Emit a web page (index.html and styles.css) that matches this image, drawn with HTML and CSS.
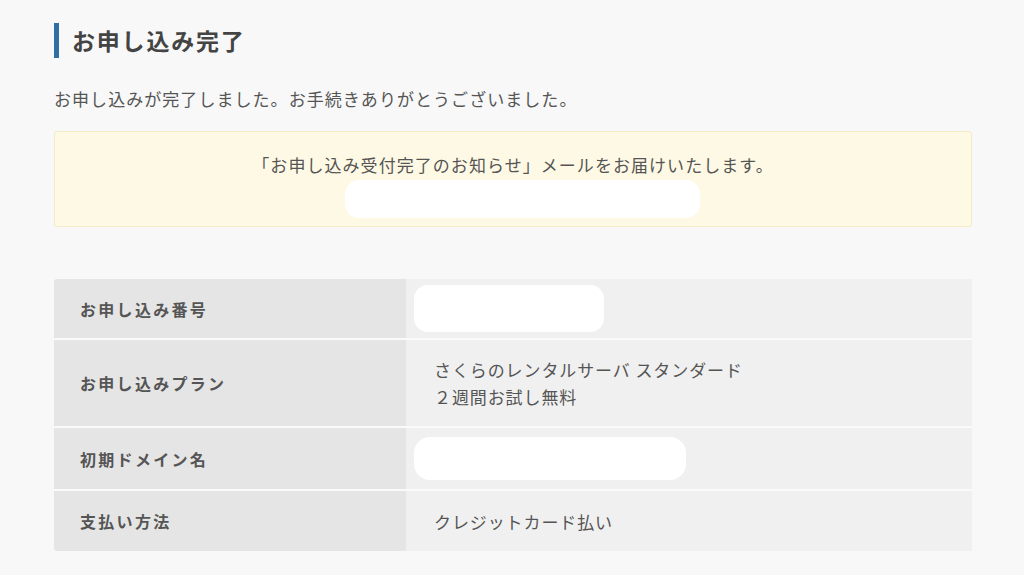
FILE: index.html
```html
<!DOCTYPE html>
<html lang="ja">
<head>
<meta charset="utf-8">
<link rel="stylesheet" href="styles.css">
</head>
<body>
<main class="page">
  <h1 class="title">お申し込み完了</h1>
  <p class="lead">お申し込みが完了しました。お手続きありがとうございました。</p>
  <div class="notice">
    <p class="notice-text">「お申し込み受付完了のお知らせ」メールをお届けいたします。</p>
    <div class="mask mask-mail"></div>
  </div>
  <table class="info">
    <tr class="row-id">
      <th>お申し込み番号</th>
      <td><div class="mask mask-id"></div></td>
    </tr>
    <tr class="row-plan">
      <th>お申し込みプラン</th>
      <td>さくらのレンタルサーバ スタンダード<br>２週間お試し無料</td>
    </tr>
    <tr class="row-domain">
      <th>初期ドメイン名</th>
      <td><div class="mask mask-domain"></div></td>
    </tr>
    <tr class="row-pay">
      <th>支払い方法</th>
      <td>クレジットカード払い</td>
    </tr>
  </table>
</main>
</body>
</html>
```

FILE: styles.css
```css
html, body {
  margin: 0;
  padding: 0;
  background: #f8f8f8;
}
body {
  font-family: "Noto Sans CJK JP", "Noto Sans", sans-serif;
  color: #555;
}
.page {
  width: 918px;
  margin-left: 54px;
  padding-top: 23px;
}
.title {
  margin: 0;
  border-left: 5px solid #2f6fa3;
  padding-left: 13px;
  font-size: 23px;
  font-weight: bold;
  line-height: 35px;
  color: #444;
  letter-spacing: 1.8px;
}
.lead {
  margin: 28px 0 0;
  font-size: 17px;
  letter-spacing: 1.05px;
  line-height: 26px;
}
.notice {
  margin-top: 19px;
  height: 94px;
  background: #fef9e4;
  border: 1px solid #f3ebc6;
  border-radius: 3px;
  display: flex;
  flex-direction: column;
  align-items: center;
}
.notice-text {
  margin: 20px 0 0;
  font-size: 17px;
  letter-spacing: 1.05px;
  line-height: 26px;
}
.mask {
  background: #fff;
}
.mask-mail {
  width: 355px;
  height: 38px;
  border-radius: 14px;
  margin: 2px 0 0 18px;
}
.info {
  margin-top: 52px;
  width: 100%;
  border-collapse: collapse;
  font-size: 17px;
  letter-spacing: 0.9px;
}
.info tr {
  border-top: 2px solid #fafafa;
}
.info tr:first-child {
  border-top: none;
}
.info th {
  width: 352px;
  background: #e5e5e5;
  text-align: left;
  font-weight: bold;
  font-size: 16px;
  letter-spacing: 2.3px;
  padding: 0 0 0 26px;
  box-sizing: border-box;
  color: #555;
}
.info td {
  background: #f0f0f0;
  padding: 0 0 0 28px;
  line-height: 27px;
}
.row-id { height: 60px; }
.row-plan { height: 88px; }
.row-domain { height: 63px; }
.row-pay { height: 61px; }
.info .row-id td,
.info .row-domain td {
  padding-left: 8px;
}
.mask-id {
  width: 190px;
  height: 47px;
  border-radius: 14px;
}
.mask-domain {
  width: 272px;
  height: 43px;
  border-radius: 16px;
}
.info tr:first-child th { border-top-left-radius: 3px; }
.info tr:last-child th { border-bottom-left-radius: 3px; }
```
